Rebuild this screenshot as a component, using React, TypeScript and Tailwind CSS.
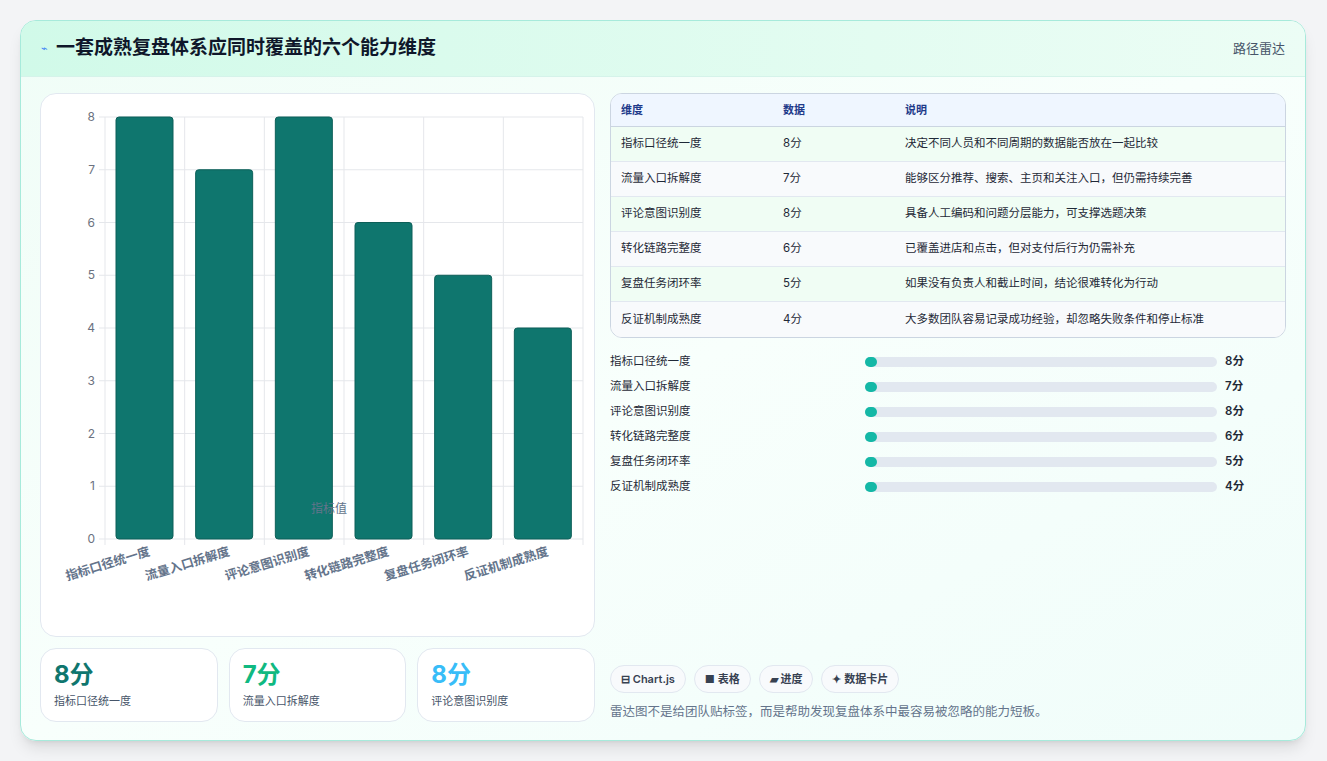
import React from 'react';

const rows = [
  { name: '指标口径统一度', v: 8, desc: '决定不同人员和不同周期的数据能否放在一起比较' },
  { name: '流量入口拆解度', v: 7, desc: '能够区分推荐、搜索、主页和关注入口，但仍需持续完善' },
  { name: '评论意图识别度', v: 8, desc: '具备人工编码和问题分层能力，可支撑选题决策' },
  { name: '转化链路完整度', v: 6, desc: '已覆盖进店和点击，但对支付后行为仍需补充' },
  { name: '复盘任务闭环率', v: 5, desc: '如果没有负责人和截止时间，结论很难转化为行动' },
  { name: '反证机制成熟度', v: 4, desc: '大多数团队容易记录成功经验，却忽略失败条件和停止标准' },
];

function Chart() {
  // svg coords relative to card (card at 40,93)
  const x0 = 64, x1 = 542, yTop = 23, yBot = 445;
  const unit = (yBot - yTop) / 8;
  const cw = (x1 - x0) / 6;
  return (
    <svg width="554" height="500" className="block">
      {[0, 1, 2, 3, 4, 5, 6, 7, 8].map(i => (
        <g key={i}>
          <line x1={x0 - 6} x2={x1} y1={yBot - i * unit} y2={yBot - i * unit} stroke="#e5e7eb" />
          <text x={x0 - 10} y={yBot - i * unit + 4} textAnchor="end" fontSize="12" fill="#6b7280">{i}</text>
        </g>
      ))}
      {[0, 1, 2, 3, 4, 5, 6].map(i => (
        <line key={i} x1={x0 + i * cw} x2={x0 + i * cw} y1={yTop} y2={yBot + 6} stroke="#e5e7eb" />
      ))}
      {rows.map((r, i) => {
        const bx = x0 + i * cw + 11;
        const h = r.v * unit;
        return (
          <g key={r.name}>
            <rect x={bx} y={yBot - h} width={57} height={h} rx={3} fill="#0f766e" stroke="#0d5f58" />
            <text x={x0 + i * cw + cw / 2 + 6} y={yBot + 16} textAnchor="end" fontSize="12.5" fontWeight="600" fill="#64748b" transform={`rotate(-17 ${x0 + i * cw + cw / 2 + 6} ${yBot + 16})`}>{r.name}</text>
          </g>
        );
      })}
      <rect x={248} y={508 - 93 - 6} width={16} height={11} fill="#0f766e" />
      <text x={270} y={508 - 93 + 4} fontSize="12" fill="#64748b">指标值</text>
    </svg>
  );
}

export default function App() {
  return (
    <div className="min-h-screen bg-[#f3f4f6] p-[20px] pr-[21px]" style={{ fontFamily: 'Inter, "Noto Sans CJK SC", sans-serif' }}>
      <div className="w-[1286px] h-[721px] rounded-2xl border border-[#a7eadb] overflow-hidden bg-gradient-to-br from-[#f0fdf7] via-[#f8fffc] to-[#f0fdfa] shadow-lg flex flex-col">
        <div className="h-[56px] shrink-0 flex items-center justify-between px-5 bg-gradient-to-r from-[#d1fae9] to-[#ecfdf5] border-b border-[#d5f3ea]">
          <div className="flex items-center gap-2">
            <span className="text-[11px] text-[#3b82f6]">⌁</span>
            <h1 className="text-[19px] font-bold text-[#0f172a]">一套成熟复盘体系应同时覆盖的六个能力维度</h1>
          </div>
          <span className="text-[13px] text-[#475569]">路径雷达</span>
        </div>
        <div className="flex gap-[15px] px-[19px] pt-[16px]">
          <div className="w-[555px] flex flex-col gap-[11px]">
            <div className="h-[544px] rounded-2xl border border-[#e2e8f0] bg-white overflow-hidden">
              <Chart />
            </div>
            <div className="grid grid-cols-3 gap-[11px]">
              {[
                { v: '8分', n: '指标口径统一度', c: 'text-[#0f766e]' },
                { v: '7分', n: '流量入口拆解度', c: 'text-[#10b981]' },
                { v: '8分', n: '评论意图识别度', c: 'text-[#38bdf8]' },
              ].map(s => (
                <div key={s.n} className="h-[74px] rounded-2xl border border-[#e2e8f0] bg-white px-[13px] pt-[10px]">
                  <div className={`text-[24px] font-bold leading-[32px] ${s.c}`}>{s.v}</div>
                  <div className="text-[11px] text-[#475569] mt-[2px]">{s.n}</div>
                </div>
              ))}
            </div>
          </div>
          <div className="w-[678px] flex flex-col">
            <div className="rounded-xl border border-[#cbd5e1] overflow-hidden bg-white">
              <div className="grid grid-cols-[162px_122px_1fr] h-[33px] items-center px-[10px] bg-[#eff6ff] border-b border-[#cbd5e1] text-[11px] font-semibold text-[#1e3a8a]">
                <div>维度</div><div>数据</div><div>说明</div>
              </div>
              {rows.map((r, i) => (
                <div key={r.name} className={`grid grid-cols-[162px_122px_1fr] h-[35px] items-center px-[10px] text-[11.5px] text-[#1f2937] ${i < 5 ? 'border-b border-[#e2e8f0]' : ''} ${i % 2 === 0 ? 'bg-[#f0fdf4]' : 'bg-[#f8fafc]'}`}>
                  <div>{r.name}</div><div>{r.v}分</div><div>{r.desc}</div>
                </div>
              ))}
            </div>
            <div className="mt-[11px] flex flex-col">
              {rows.map(r => (
                <div key={r.name} className="h-[25px] flex items-center text-[11.5px] text-[#1f2937]">
                  <div className="w-[255px]">{r.name}</div>
                  <div className="w-[352px] h-[10px] rounded-full bg-[#e2e8f0]">
                    <div className="w-[12px] h-[10px] rounded-full bg-[#14b8a6]" />
                  </div>
                  <div className="ml-[8px] font-semibold">{r.v}分</div>
                </div>
              ))}
            </div>
            <div className="mt-auto mb-[0px] pt-2">
              <div className="flex gap-[8px]">
                {['⊟ Chart.js', '■ 表格', '▰ 进度', '✦ 数据卡片'].map(t => (
                  <span key={t} className="h-[28px] px-[10px] flex items-center rounded-full border border-[#e2e8f0] bg-[#f8fafc] text-[11px] font-semibold text-[#374151]">{t}</span>
                ))}
              </div>
              <p className="mt-[10px] text-[12.5px] text-[#64748b]">雷达图不是给团队贴标签，而是帮助发现复盘体系中最容易被忽略的能力短板。</p>
            </div>
          </div>
        </div>
      </div>
    </div>
  );
}
